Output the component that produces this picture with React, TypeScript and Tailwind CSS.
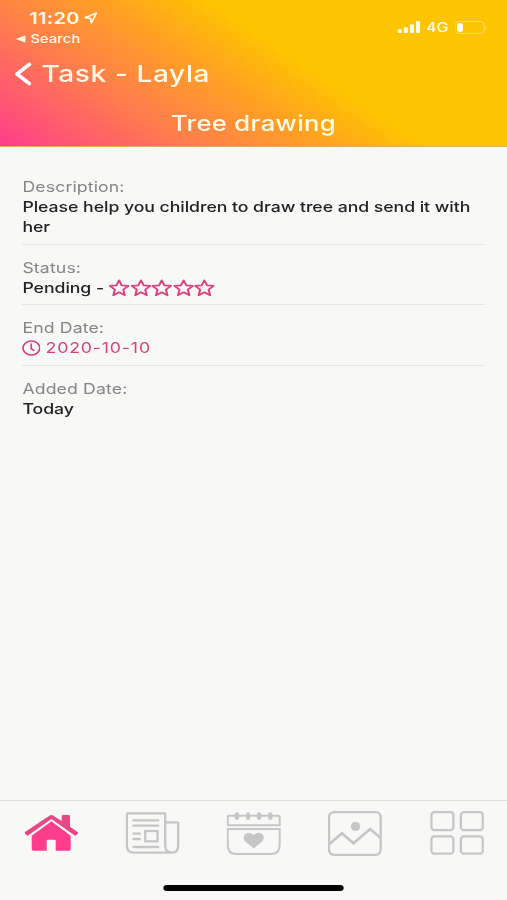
import type { ReactNode } from "react";

const StatusBar = () => {
    return (
        <div className="flex h-[50px] justify-between">
            <div className="pl-[24px] pt-[9px]">
                <div className="flex items-center gap-[4px]">
                    <div className="h-[18px] text-[16.5px] font-semibold leading-[19px] tracking-[0.2px]">11:20</div>
                    <svg className="h-[12px] w-[11px]" viewBox="0 0 40 36" preserveAspectRatio="none" fill="none" stroke="currentColor" strokeWidth="5" strokeLinejoin="round">
                        <path d="M37 3 L3 17 L19 19 L22 33 Z" />
                    </svg>
                </div>
                <div className="-ml-[11px] mt-[4px] flex items-center gap-[4px]">
                    <svg className="h-[8px] w-[8px]" viewBox="0 0 8 8" fill="currentColor">
                        <path d="M0 4 L8 0.3 V7.7 Z" />
                    </svg>
                    <div className="text-[12px] font-medium leading-[15px] tracking-[0.1px]">Search</div>
                </div>
            </div>
            <div className="flex h-[14px] items-center pr-[16px] mt-[20px]">
                <svg className="h-[12px] w-[19px]" viewBox="0 0 72 36" preserveAspectRatio="none" fill="currentColor">
                    <rect x="1" y="25" width="13" height="11" rx="3" />
                    <rect x="20" y="19" width="13" height="17" rx="3" />
                    <rect x="39" y="10" width="13" height="26" rx="3" />
                    <rect x="58" y="0" width="13" height="36" rx="3" />
                </svg>
                <div className="ml-[5px] text-[13px] font-medium leading-[14px]">4G</div>
                <svg className="ml-[5px] h-[13px] w-[27px]" viewBox="0 0 99 39" preserveAspectRatio="none">
                    <rect x="2" y="2" width="87" height="35" rx="10" fill="none" stroke="white" strokeOpacity="0.4" strokeWidth="3" />
                    <rect x="8" y="7" width="17" height="25" rx="5" fill="white" />
                    <path d="M93 13 Q99 19 93 26 Z" fill="white" fillOpacity="0.5" />
                </svg>
            </div>
        </div>
    )
}

const Header = () => {
    return (
        <header className="h-[147px] border-b border-[#d9ad62] bg-[linear-gradient(39deg,#ff3d8c_0%,#ff7a50_25%,#ffa024_44%,#fdc500_59%)] text-[#fff9e8]">
            <StatusBar />
            <div className="flex h-[48px] items-center pl-[12px]">
                <svg className="h-[24px] w-[14px] text-white" viewBox="0 0 51 72" preserveAspectRatio="none" fill="none" stroke="currentColor" strokeWidth="11" strokeLinecap="round" strokeLinejoin="round">
                    <path d="M44 7 L7 36 L44 65" />
                </svg>
                <div className="ml-[8px] text-[23px] font-medium leading-[29px] tracking-[0.5px]">Task - Layla</div>
            </div>
            <div className="pt-[11px] text-center text-[21px] font-medium leading-[29px] tracking-[0.3px]">Tree drawing</div>
        </header>
    )
}

const Field = ({ label, children }: { label: string; children: ReactNode }) => {
    return (
        <div className="border-b border-[#e6e6e4] pb-[6.5px] pt-[13px] last:border-b-0">
            <div className="text-[#858585]">{label}</div>
            <div className="font-medium tracking-[-0.04px] text-[#222222]">{children}</div>
        </div>
    )
}

const Star = () => {
    return (
        <svg className="h-[18px] w-[17.4px]" viewBox="0 0 24 24" preserveAspectRatio="none" fill="none" stroke="currentColor" strokeWidth="2.3" strokeLinejoin="round">
            <path d="M12 1.8 L15 8.6 L22.5 9.3 L16.8 14.3 L18.5 21.8 L12 17.8 L5.5 21.8 L7.2 14.3 L1.5 9.3 L9 8.6 Z" />
        </svg>
    )
}

const Details = () => {
    return (
        <main className="ml-[18.4px] w-[380px] flex-1 pt-[17.4px] text-[14.5px] leading-[20px] tracking-[0.1px]">
            <Field label="Description:">Please help you children to draw tree and send it with her</Field>
            <Field label="Status:">
                <div className="flex h-[20px] items-center">
                    Pending -
                    <div className="ml-[4px] flex text-[#d9447f]">
                        <Star />
                        <Star />
                        <Star />
                        <Star />
                        <Star />
                    </div>
                </div>
            </Field>
            <Field label="End Date:">
                <div className="flex h-[20px] items-center gap-[4px] font-normal tracking-[0.7px] text-[#d83d7c]">
                    <svg className="-ml-[0.5px] h-[16px] w-[15.5px]" viewBox="0 0 57 48" preserveAspectRatio="none" fill="none" stroke="currentColor" strokeWidth="5" strokeLinecap="round">
                        <ellipse cx="28.5" cy="24" rx="25.5" ry="21" />
                        <path d="M28 12 V26 L36 31" />
                    </svg>
                    2020-10-10
                </div>
            </Field>
            <Field label="Added Date:">Today</Field>
        </main>
    )
}

const TabBar = () => {
    return (
        <nav className="h-[100px] border-t border-[#dcdcda] pt-[9.4px] text-[#c6c6c6]">
            <div className="grid h-[46px] grid-cols-5 items-center justify-items-center pl-[1px]">
                <svg className="h-[36px] w-[44.3px] text-[#ff3d8b]" viewBox="0 0 162 108" preserveAspectRatio="none" fill="currentColor">
                    <path d="M81 19 L139 62 V102 Q139 107 134 107 H94 V77 Q94 74 91 74 H70 Q67 74 67 77 V107 H27 Q22 107 22 102 V62 Z" />
                    <path d="M75 2 Q81 -2 87 2 L112 18 V4 Q112 0 116 0 H133 Q137 0 137 4 V35 L160 51 Q162 53 160 56 L155 61 Q153 63 150 61 L81 12 L12 61 Q9 63 7 61 L2 56 Q0 53 2 51 Z" fill="#e94888" />
                </svg>
                <svg className="h-[42px] w-[44.3px]" viewBox="0 0 162 126" preserveAspectRatio="none" fill="none" stroke="currentColor" strokeWidth="7">
                    <path d="M119 98 V6 Q119 4 117 4 H6 Q4 4 4 6 V102 Q4 122 26 122 H139 Q158 122 158 102 V34 Q158 31 155 31 H119 V100 Q119 122 139 122" />
                    <path d="M24 25 H98 M24 41 H98 M24 65 H43 M24 81 H43 M24 105 H98" strokeLinecap="round" />
                    <rect x="59" y="57" width="37" height="31" />
                </svg>
                <svg className="h-[43px] w-[44.3px]" viewBox="0 0 162 129" preserveAspectRatio="none" fill="none" stroke="currentColor" strokeWidth="6">
                    <path d="M3 40 V15 Q3 11 8 11 H154 Q159 11 159 15 V40 Z" />
                    <path d="M3 51 H159 V98 Q159 126 133 126 H29 Q3 126 3 98 Z" />
                    <path d="M31 7 V17 M64 7 V17 M97 7 V17 M131 7 V17" strokeWidth="13" strokeLinecap="round" />
                    <path d="M81 109 L57 90 Q47 80 53 69 Q59 61 70 63 Q77 64 81 70 Q85 64 92 63 Q103 61 109 69 Q115 80 105 90 Z" fill="currentColor" stroke="none" />
                </svg>
                <svg className="h-[45px] w-[44.3px]" viewBox="0 0 162 135" preserveAspectRatio="none" fill="none" stroke="currentColor" strokeWidth="7">
                    <rect x="3.5" y="3.5" width="155" height="128" rx="15" />
                    <path d="M5 99 L42 67 L77 97 L127 54 L158 80" strokeWidth="8" />
                    <circle cx="83" cy="46" r="14" fill="currentColor" stroke="none" />
                </svg>
                <svg className="ml-[1px] h-[44px] w-[44.3px]" viewBox="0 0 162 132" preserveAspectRatio="none" fill="none" stroke="currentColor" strokeWidth="7">
                    <rect x="3.5" y="3.5" width="66" height="54" rx="9" />
                    <rect x="92" y="3.5" width="66" height="54" rx="9" />
                    <rect x="3.5" y="76" width="66" height="52" rx="9" />
                    <rect x="92" y="76" width="66" height="52" rx="9" />
                </svg>
            </div>
            <div className="mx-auto mt-[29px] h-[6px] w-[148px] rounded-full bg-black" />
        </nav>
    )
}

const App = () => {
    return (
        <div className="h-[900px] w-[507px] overflow-hidden bg-[#f8f8f7]">
            <div className="flex h-[900px] w-[416px] origin-left scale-x-[1.21875] flex-col font-['Inter',sans-serif]">
                <Header />
                <Details />
                <TabBar />
            </div>
        </div>
    )
}

export default App
